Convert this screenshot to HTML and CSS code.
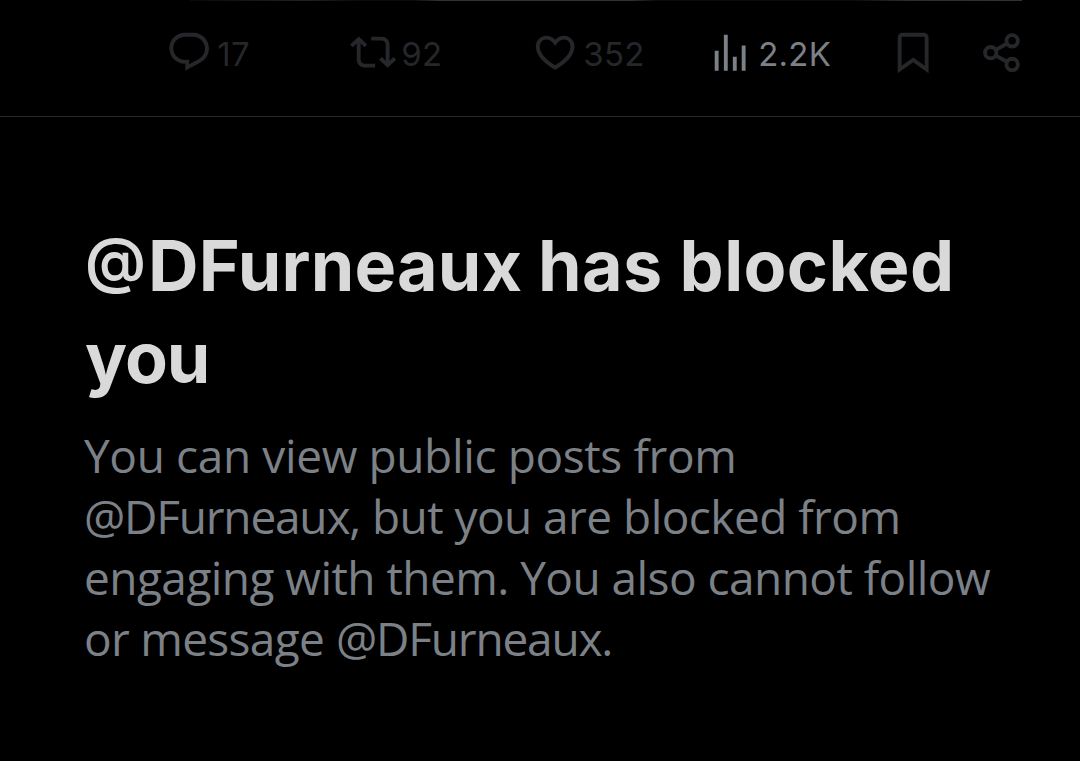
FILE: index.html
```
<!DOCTYPE html>
<html lang="en">
<head>
    <meta charset="UTF-8">
    <meta name="viewport" content="width=device-width, initial-scale=1.0">
    <title>@DFurneaux</title>
    <link rel="stylesheet" href="styles.css">
</head>
<body>
    <div class="media-edge"></div>
    <div class="actions">
        <div class="action">
            <svg class="icon" viewBox="0 0 24 24"><path d="M1.751 10c0-4.42 3.584-8 8.005-8h4.366c4.49 0 8.129 3.64 8.129 8.13 0 2.96-1.607 5.68-4.196 7.11l-8.054 4.46v-3.69h-.067c-4.49.1-8.183-3.51-8.183-8.01zm8.005-6c-3.317 0-6.005 2.69-6.005 6 0 3.37 2.77 6.08 6.138 6.01l.351-.01h1.761v2.3l5.087-2.81c1.951-1.08 3.163-3.13 3.163-5.36 0-3.39-2.744-6.13-6.129-6.13H9.756z"/></svg>
            <span class="count">17</span>
        </div>
        <div class="action">
            <svg class="icon" viewBox="0 0 24 24"><path d="M4.5 3.88l4.432 4.14-1.364 1.46L5.5 7.55V16c0 1.1.896 2 2 2H13v2H7.5c-2.209 0-4-1.79-4-4V7.55L1.432 9.48.068 8.02 4.5 3.88zM16.5 6H11V4h5.5c2.209 0 4 1.79 4 4v8.45l2.068-1.93 1.364 1.46-4.432 4.14-4.432-4.14 1.364-1.46 2.068 1.93V8c0-1.1-.896-2-2-2z"/></svg>
            <span class="count">92</span>
        </div>
        <div class="action">
            <svg class="icon" viewBox="0 0 24 24"><path d="M16.697 5.5c-1.222-.06-2.679.51-3.89 2.16l-.805 1.09-.806-1.09C9.984 6.01 8.526 5.44 7.304 5.5c-1.243.07-2.349.78-2.91 1.91-.552 1.12-.633 2.78.479 4.82 1.074 1.97 3.257 4.27 7.129 6.61 3.87-2.34 6.052-4.64 7.126-6.61 1.111-2.04 1.03-3.7.477-4.82-.561-1.13-1.666-1.84-2.908-1.91zm4.187 7.69c-1.351 2.48-4.001 5.12-8.379 7.67l-.503.3-.504-.3c-4.379-2.55-7.029-5.19-8.382-7.67-1.36-2.5-1.41-4.86-.514-6.67.887-1.79 2.647-2.91 4.601-3.01 1.651-.09 3.368.56 4.798 2.01 1.429-1.45 3.146-2.1 4.796-2.01 1.954.1 3.714 1.22 4.601 3.01.896 1.81.846 4.17-.514 6.67z"/></svg>
            <span class="count">352</span>
        </div>
        <div class="action active">
            <svg class="icon" viewBox="0 0 24 24"><path d="M8.75 21.6V3h2v18.6h-2zM18 21.6v-13h2v13h-2zM4 21.6V11.3h2v10.3H4zm9.4 0v-7.2h2v7.2h-2z"/></svg>
            <span class="count">2.2K</span>
        </div>
        <div class="action">
            <svg class="icon" viewBox="0 0 24 24"><path d="M4 4.5C4 3.12 5.119 2 6.5 2h11C18.881 2 20 3.12 20 4.5v18.44l-8-5.71-8 5.71V4.5zM6.5 4c-.276 0-.5.22-.5.5v14.56l6-4.29 6 4.29V4.5c0-.28-.224-.5-.5-.5h-11z"/></svg>
        </div>
        <div class="action">
            <svg class="icon share" viewBox="0 0 24 24">
                <circle cx="6.6" cy="12.3" r="2.95"/>
                <circle cx="17.7" cy="6.1" r="2.95"/>
                <circle cx="17.7" cy="18.4" r="2.95"/>
                <path d="M9.2 10.8l5.9-3.3M9.2 13.8l5.9 3.2"/>
            </svg>
        </div>
    </div>

    <div class="blocked">
        <h1><span class="at">@</span><span class="name">DFurneaux</span> <span class="state">has blocked</span><br>you</h1>
        <p>
            <span class="normal">You can view public posts from</span><br>
            <span class="handle">@DFurneaux,</span> <span class="medium">but you are blocked from</span><br>
            <span class="medium">engaging with them. You also cannot follow</span><br>
            <span class="tight">or message</span> <span class="handle">@DFurneaux.</span>
        </p>
    </div>
</body>
</html>
```
FILE: styles.css
```
:root {
    --text-color: #d9d9d9;
    --muted-color: #7c8187;
    --dim-color: #25272a;
    --border-color: #262729;
}
* {
    box-sizing: border-box;
}
body {
    margin: 0;
    height: 761px;
    overflow: hidden;
    background-color: #000000;
    color: var(--text-color);
    font-family: Inter, "Liberation Sans", sans-serif;
}
/* bottom edge of the media above the actions */
.media-edge {
    height: 1px;
    margin: 0 58px 0 190px;
    background: linear-gradient(to right, #08090a 0%, #202123 14%, #0b0c0d 20%, #0b0c0d 27%, #303233 30%, #303233 53%, #0b0c0d 56%, #0b0c0d 80%, #2b2c2d 86%, #303233 100%);
}
.actions {
    display: grid;
    grid-template-columns: 184px 182px 175px 183px 88px 1fr;
    height: 116px;
    padding: 28px 0 0 166px;
    border-bottom: 1px solid var(--border-color);
}
.action {
    display: flex;
    align-items: flex-start;
    color: var(--dim-color);
}
.action.active {
    color: var(--muted-color);
}
.icon {
    width: 46.3px;
    height: 46.3px;
    flex: none;
    fill: currentColor;
}
.icon.share {
    fill: none;
    stroke: currentColor;
    stroke-width: 2;
}
.count {
    margin-left: 5px;
    font-size: 33px;
    line-height: 51px;
    font-weight: 380;
    letter-spacing: 0.2px;
}
.blocked {
    padding: 103px 60px 0 85px;
}
h1 {
    margin: 0;
    font-size: 70px;
    line-height: 92px;
    font-weight: 700;
    letter-spacing: -1px;
}
.at {
    margin-right: 3px;
    font-size: 61px;
    line-height: 1;
    font-weight: 600;
    position: relative;
    top: -9px;
}
.name {
    letter-spacing: 0.2px;
}
.state {
    letter-spacing: 0.4px;
}
p {
    margin: 21px 0 0 -1px;
    font-family: "Open Sans", "Liberation Sans", sans-serif;
    font-size: 46px;
    line-height: 61px;
    font-weight: 430;
    color: var(--muted-color);
    white-space: nowrap;
}
.normal {
    letter-spacing: -0.37px;
}
.medium {
    letter-spacing: -0.55px;
}
.tight {
    letter-spacing: -0.7px;
}
.handle {
    letter-spacing: -1.2px;
}
```
